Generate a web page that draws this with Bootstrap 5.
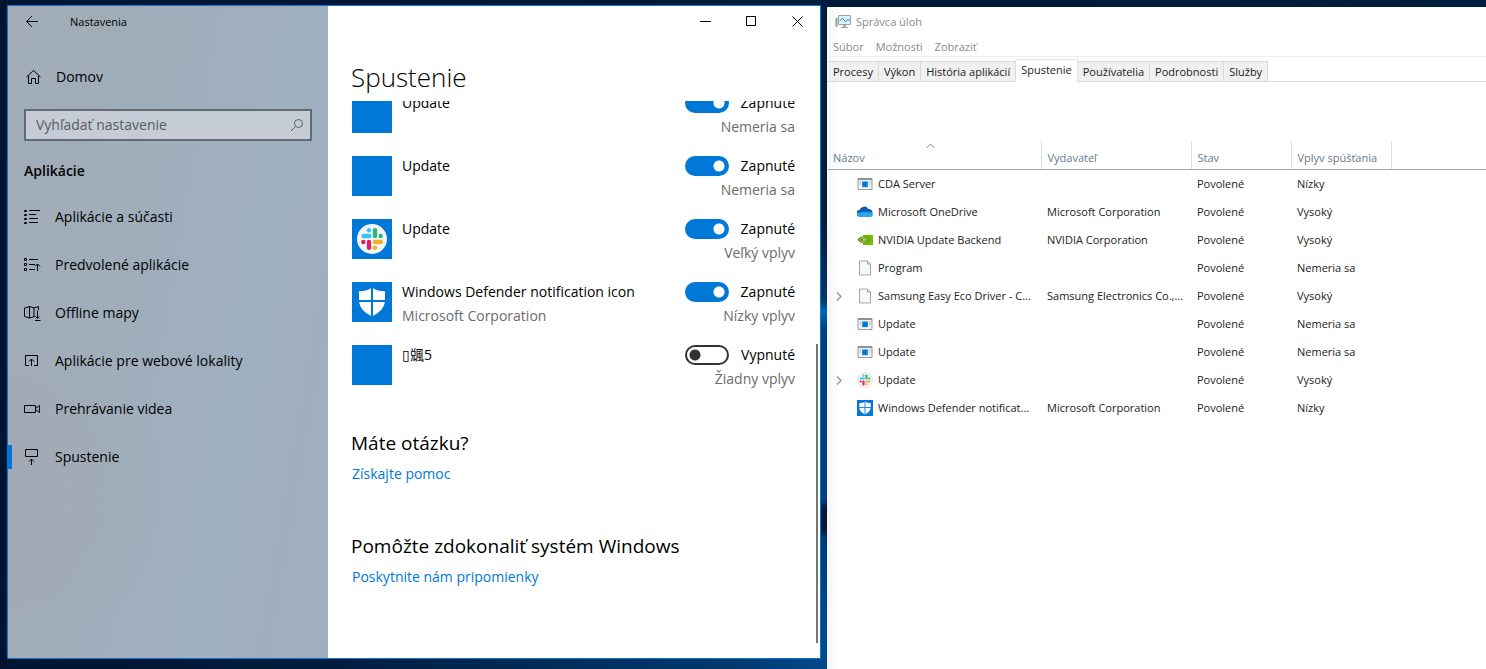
<!DOCTYPE html>
<html lang="sk">
<head>
<meta charset="utf-8">
<meta name="viewport" content="width=device-width, initial-scale=1">
<title>Nastavenia – Spustenie</title>
<link rel="stylesheet" href="https://cdn.jsdelivr.net/npm/bootstrap@5.3.0/dist/css/bootstrap.min.css">
<style>
  body { font-family: "Open Sans", "Noto Sans CJK TC", sans-serif; font-size: 14px; line-height: 24px; color: #000; }
  button, input { font: inherit; }
  a { color: #0078d7; text-decoration: none; }
  .desktop { min-height: 100vh; padding-left: 7px; display: grid; grid-template-columns: minmax(0, 814fr) minmax(0, 659fr); column-gap: 6px;
    background: linear-gradient(#001c3c 0, #001c3c 225px, #003566 300px, #0064b4 312px, #003f78 330px, #00417d 500px, #001a38 508px, #001a38 530px, #003c73 538px, #004a8c 645px) 820px 0 / 8px 100% no-repeat,
      linear-gradient(90deg, #001430 0, #001c3c 330px, #003a70 740px, #00498c 826px) 0 100% / 100% 12px no-repeat,
      linear-gradient(100deg, #001430, #001f40); }
  .win-settings { margin: 5px 0 10px; border: 1px solid #0078d7; background: #fff; }
  .win-tasks { margin-top: 7px; overflow: hidden; color: #222; font-size: 11px; line-height: 20px;
    background: linear-gradient(90deg, #f4f4f4, #fff 12px); }
  .side { flex: 0 0 320px; background: radial-gradient(circle at 0 75%, #a3a8b3 0, transparent 160px), linear-gradient(100deg, #a1acb6, #9eafbf 70%, #a0adbd); }
  .plain { border: 0; background: none; padding: 0; color: inherit; display: flex; align-items: center; }
  .title-row { height: 31px; gap: 31px; padding-left: 17px; font-size: 11px; }
  .side-link { height: 48px; padding-left: 16px; gap: 14px; color: #000; }
  .side-link.home { margin-top: 16px; padding-left: 17px; }
  .side-link.active { background: linear-gradient(#0078d7, #0078d7) 0 50% / 4px 24px no-repeat; }
  .search { margin: 8px 16px 0; height: 32px; border: 2px solid #636b73; background: #c6ccd6; padding-right: 6px; }
  .search input { border: 0; background: none; flex: 1; min-width: 0; padding: 0 10px 1px; color: #4f555c; outline: 0; }
  .search input::placeholder { color: #565c63; opacity: 1; }
  .side h2 { font-size: 14px; line-height: 24px; font-weight: 600; margin: 18px 16px 10px; }
  .caption-btns { height: 31px; }
  .caption-btns button { width: 46px; justify-content: center; }
  .main-pane { padding-left: 23px; }
  .main-pane h1 { font-size: 26px; line-height: 40px; font-weight: 300; margin: 20px 0 4px; }
  .scroll-area { overflow: hidden; }
  .thumb { width: 2px; background: #767676; margin: 243px 2px 15px 0; }
  .app-list { margin: -8px 21px 0 1px; }
  .app-row { height: 63px; gap: 10px; }
  .app-text { margin-top: -2px; }
  .app-ico { width: 40px; height: 40px; flex: none; background: #0078d7; }
  .muted { color: #6b6b6b; }
  .app-row .form-switch { min-height: 0; padding: 0; margin: 0; gap: 12px; }
  .app-row .form-switch .form-check-input { width: 44px; height: 20px; margin: 0; float: none; border: 2px solid #333; border-radius: 10px;
    background: radial-gradient(circle at 8px 8px, #333 5px, transparent 6px); }
  .app-row .form-switch .form-check-input:checked { border-color: #0078d7; background: radial-gradient(circle at 32px 8px, #fff 5px, #0078d7 6px) border-box; background-origin: padding-box; }
  .main-pane h2 { font-size: 19px; line-height: 28px; font-weight: 400; margin: 0 0 5px; }
  .help { margin-top: 21px; }
  .feedback { margin-top: 46px; }
  .help a, .feedback a { padding-left: 1px; }
  .tm-title { height: 29px; gap: 4px; padding-left: 8px; color: #8a8a8a; }
  .tm-menu { height: 21px; gap: 12px; padding: 1px 6px 0; color: #8a8a8a; border-bottom: 1px solid #efefef; }
  .tm-tabs { border-bottom: 1px solid #d9d9d9; margin: 2px 0 0; padding-left: 1px; height: 23px; align-items: flex-end; flex-wrap: nowrap; }
  .tm-tabs .nav-link { padding: 0 5px; height: 20px; line-height: 20px; border: 1px solid #d9d9d9; border-left-width: 0; border-bottom: 0; border-radius: 0; background: #f0f0f0; color: #222; margin: 0; white-space: nowrap; font-size: 11px; }
  .tm-tabs .nav-link.active { height: 23px; background: #fff; color: #222; margin-bottom: -1px; }
  .tm-table { table-layout: fixed; width: 100%; margin: 59px 0 0 1px; }
  .tm-table th { height: 28px; font-weight: 400; color: #66788c; vertical-align: bottom; padding: 0 5px; border-bottom: 1px solid #a8a8a8; border-right: 1px solid #dedede; line-height: 22px; position: relative; }
  .tm-table th:last-child { border-right: 0; }
  .tm-table td { height: 28px; padding: 2px 5px 0; white-space: nowrap; overflow: hidden; text-overflow: ellipsis; }
  .tm-table th:not(:first-child), .tm-table td:not(:first-child) { padding-left: 6px; }
  .sort-mark { position: absolute; left: 50%; top: 2px; margin-left: -8px; }
  .c-name { width: 213px; } .c-pub { width: 150px; } .c-std { width: 100px; }
  .name-cell { gap: 5px; }
  .name-cell .exp { width: 19px; padding-left: 1px; flex: none; line-height: 0; }
  .name-cell > svg { flex: none; }
</style>
</head>
<body>
<svg width="0" height="0" class="position-absolute" aria-hidden="true">
  <symbol id="i-slack" viewBox="0 0 40 40">
    <circle cx="20" cy="20" r="15" fill="#f6f6f6"/>
    <g stroke-width="4.4" stroke-linecap="round" fill="none">
      <path d="M11.500 17h6" stroke="#36c5f0"/><path d="M17 11.200v.1" stroke="#36c5f0"/>
      <path d="M23 11.200v5.800" stroke="#2eb67d"/><path d="M28.700 17v.1" stroke="#2eb67d"/>
      <path d="M23 23h5.800" stroke="#ecb22e"/><path d="M23 28.600v.1" stroke="#ecb22e"/>
      <path d="M17 23v5.800" stroke="#e01e5a"/><path d="M11.300 23v.1" stroke="#e01e5a"/>
    </g>
  </symbol>
  <symbol id="i-shield" viewBox="0 0 40 40">
    <path d="M20 5.500C16.500 8.300 12 9.200 7 9.200V18c0 8 6 13 13 16.500C27 31 33 26 33 18V9.200c-5 0-9.500-.9-13-3.700z" fill="#fff"/>
    <path d="M20 4v31M6 19h28" stroke="#0078d7" stroke-width="2"/>
  </symbol>
  <symbol id="i-app" viewBox="0 0 16 16">
    <path d="M1 2.500h14v11H1z" fill="#f1f2f3" stroke="#959ca3"/><path d="M1 3h14" stroke="#8a9198" stroke-width="2"/>
    <path d="M5.200 5.500h5.600v5.600H5.200z" fill="#0078d7"/><path d="M2.500 6h1.600M2.500 8h1.600M12 6h2M12 8h1.500" stroke="#9eb6cc"/>
  </symbol>
  <symbol id="i-doc" viewBox="0 0 16 16">
    <path d="M2.500 1h8l3 3v11h-11z" fill="#f8f8f8" stroke="#a5a5a5"/><path d="M10.500 1v3h3" fill="#ddd" stroke="#a5a5a5"/>
  </symbol>
</svg>

<main class="desktop">
  <section class="win-settings d-flex" aria-label="Nastavenia">
    <aside class="side">
      <div class="title-row d-flex align-items-center">
        <button class="plain" aria-label="Späť"><svg width="14" height="14" viewBox="0 0 14 14" fill="none" stroke="#000"><path d="M13 6.500H1.500M7 1L1.500 6.500 7 12"/></svg></button>
        <span>Nastavenia</span>
      </div>
      <a href="#" class="side-link home d-flex align-items-center">
        <svg width="17" height="16" viewBox="0 0 17 16" fill="none" stroke="#000"><path d="M1.500 8L8.500 1.500 15.500 8M3.500 6.500v8h3v-5h4v5h3v-8"/></svg>
        <span>Domov</span>
      </a>
      <div class="search d-flex align-items-center">
        <input type="text" placeholder="Vyhľadať nastavenie" aria-label="Vyhľadať nastavenie">
        <svg width="14" height="14" viewBox="0 0 14 14" fill="none" stroke="#555c64"><circle cx="8.500" cy="5.500" r="4"/><path d="M5.600 8.400L1 13"/></svg>
      </div>
      <h2>Aplikácie</h2>
      <nav>
        <a href="#" class="side-link d-flex align-items-center">
          <svg width="17" height="17" viewBox="0 0 17 17" fill="none" stroke="#000"><path d="M.5 1.500h2v1h-2zM.5 5.500h2v1h-2zM.5 9.500h2v1h-2zM.5 13.500h2v1h-2zM5 1.500h11M5 5.500h7M5 9.500h9M5 13.500h9"/></svg><span>Aplikácie a súčasti</span></a>
        <a href="#" class="side-link d-flex align-items-center">
          <svg width="17" height="17" viewBox="0 0 17 17" fill="none" stroke="#000"><path d="M.5 1.500h2v2h-2zM.5 6.500h2v2h-2zM.5 11.500h2v2h-2zM5 2.500h9M5 7.500h6M5 12.500h6M13.500 14V7M11 9.500L13.500 7 16 9.500"/></svg><span>Predvolené aplikácie</span></a>
        <a href="#" class="side-link d-flex align-items-center">
          <svg width="17" height="17" viewBox="0 0 17 17" fill="none" stroke="#000"><path d="M10.500 11.500L5.500 13 .5 11.500V3L5.500 1.500 10 3l4.500-1.500V5M5.500 1.500v11.500M10 3v8.500M13.500 5.500v8M11.500 11.500l2 2 2-2M11 15.500h5.500"/></svg><span>Offline mapy</span></a>
        <a href="#" class="side-link d-flex align-items-center">
          <svg width="17" height="17" viewBox="0 0 17 17" fill="none" stroke="#000"><path d="M5 12.500H1.500v-10h12v10H10M7.500 13V6M5 8.500L7.500 6 10 8.500"/></svg><span>Aplikácie pre webové lokality</span></a>
        <a href="#" class="side-link d-flex align-items-center">
          <svg width="17" height="17" viewBox="0 0 17 17" fill="none" stroke="#000"><path d="M.5 4.500h11v7H.5zM12 7l3.500-2.500v7L12 9"/></svg><span>Prehrávanie videa</span></a>
        <a href="#" class="side-link active d-flex align-items-center">
          <svg width="17" height="17" viewBox="0 0 17 17" fill="none" stroke="#000"><path d="M1.500.5h12v7h-12zM7.500 16v-6M5 12.500L7.500 10l2.500 2.500"/></svg><span>Spustenie</span></a>
      </nav>
    </aside>

    <div class="flex-grow-1 d-flex flex-column">
      <div class="caption-btns d-flex justify-content-end">
        <button class="plain" aria-label="Minimalizovať"><svg width="11" height="11" stroke="#000" fill="none"><path d="M0 5.500h11"/></svg></button>
        <button class="plain" aria-label="Maximalizovať"><svg width="11" height="11" stroke="#000" fill="none"><path d="M.5.5h9v9h-9z"/></svg></button>
        <button class="plain" aria-label="Zavrieť"><svg width="11" height="11" stroke="#000" fill="none"><path d="M.5.5l10 10M10.500.5l-10 10"/></svg></button>
      </div>
      <div class="main-pane flex-grow-1 d-flex flex-column">
        <h1>Spustenie</h1>
        <div class="flex-grow-1 d-flex">
          <div class="scroll-area flex-grow-1">
            <div class="app-list">
              <div class="app-row d-flex">
                <div class="app-ico"></div><div class="app-text flex-grow-1"><div>Update</div></div>
                <div class="app-text text-end"><div class="form-check form-switch d-flex align-items-center"><input class="form-check-input" type="checkbox" role="switch" id="s1" checked><label for="s1">Zapnuté</label></div><div class="muted">Nemeria sa</div></div>
              </div>
              <div class="app-row d-flex">
                <div class="app-ico"></div><div class="app-text flex-grow-1"><div>Update</div></div>
                <div class="app-text text-end"><div class="form-check form-switch d-flex align-items-center"><input class="form-check-input" type="checkbox" role="switch" id="s2" checked><label for="s2">Zapnuté</label></div><div class="muted">Nemeria sa</div></div>
              </div>
              <div class="app-row d-flex">
                <svg class="app-ico"><use href="#i-slack"/></svg><div class="app-text flex-grow-1"><div>Update</div></div>
                <div class="app-text text-end"><div class="form-check form-switch d-flex align-items-center"><input class="form-check-input" type="checkbox" role="switch" id="s3" checked><label for="s3">Zapnuté</label></div><div class="muted">Veľký vplyv</div></div>
              </div>
              <div class="app-row d-flex">
                <svg class="app-ico"><use href="#i-shield"/></svg><div class="app-text flex-grow-1"><div>Windows Defender notification icon</div><div class="muted">Microsoft Corporation</div></div>
                <div class="app-text text-end"><div class="form-check form-switch d-flex align-items-center"><input class="form-check-input" type="checkbox" role="switch" id="s4" checked><label for="s4">Zapnuté</label></div><div class="muted">Nízky vplyv</div></div>
              </div>
              <div class="app-row d-flex">
                <div class="app-ico"></div><div class="app-text flex-grow-1"><div>▯䬇5</div></div>
                <div class="app-text text-end"><div class="form-check form-switch d-flex align-items-center"><input class="form-check-input" type="checkbox" role="switch" id="s5"><label for="s5">Vypnuté</label></div><div class="muted">Žiadny vplyv</div></div>
              </div>
            </div>
            <div class="help"><h2>Máte otázku?</h2><a href="#">Získajte pomoc</a></div>
            <div class="feedback"><h2>Pomôžte zdokonaliť systém Windows</h2><a href="#">Poskytnite nám pripomienky</a></div>
          </div>
          <div class="thumb"></div>
        </div>
      </div>
    </div>
  </section>

  <section class="win-tasks" aria-label="Správca úloh">
    <div class="tm-title d-flex align-items-center">
      <svg width="17" height="16" viewBox="0 0 17 16"><path d="M.5 4h2v9h-2z" fill="#9a9a9a"/><path d="M1 5h1v2H1z" fill="#2ecc40"/><path d="M3.500 1.500h12v9h-12z" fill="#dff3fb" stroke="#9aa3aa"/><path d="M4.500 7L7.500 4l3 4 2-2.500 2.500 1" fill="none" stroke="#2a8fc9"/><path d="M8 11h3v2h2v1H6v-1h2z" fill="#a5a5a5"/></svg>
      <span>Správca úloh</span>
    </div>
    <div class="tm-menu d-flex align-items-center">
      <button class="plain">Súbor</button><button class="plain">Možnosti</button><button class="plain">Zobraziť</button>
    </div>
    <nav class="nav nav-tabs tm-tabs">
      <a class="nav-link" href="#">Procesy</a><a class="nav-link" href="#">Výkon</a><a class="nav-link" href="#">História aplikácií</a><a class="nav-link active" href="#">Spustenie</a><a class="nav-link" href="#">Používatelia</a><a class="nav-link" href="#">Podrobnosti</a><a class="nav-link" href="#">Služby</a>
    </nav>
    <table class="tm-table">
      <colgroup><col class="c-name"><col class="c-pub"><col class="c-std"><col class="c-std"><col></colgroup>
      <thead><tr><th>Názov<svg class="sort-mark" width="9" height="6" fill="none" stroke="#888"><path d="M.5 5l4-4 4 4"/></svg></th><th>Vydavateľ</th><th>Stav</th><th>Vplyv spúšťania</th><th></th></tr></thead>
      <tbody>
        <tr><td><div class="name-cell d-flex align-items-center"><span class="exp"></span><svg width="16" height="16"><use href="#i-app"/></svg><span class="text-truncate">CDA Server</span></div></td><td></td><td>Povolené</td><td>Nízky</td><td></td></tr>
        <tr><td><div class="name-cell d-flex align-items-center"><span class="exp"></span><svg width="16" height="16" viewBox="0 0 16 16"><path d="M2.500 12.500A3 3 0 0 1 2.500 6 5 5 0 0 1 11.500 5 3.600 3.600 0 0 1 15.500 9z" fill="#0a5fb4"/><path d="M2.500 13A2.500 2.500 0 0 1 .5 9L6 8l7.500.2A2.400 2.400 0 0 1 13.500 13z" fill="#28a8ea"/></svg><span class="text-truncate">Microsoft OneDrive</span></div></td><td>Microsoft Corporation</td><td>Povolené</td><td>Vysoký</td><td></td></tr>
        <tr><td><div class="name-cell d-flex align-items-center"><span class="exp"></span><svg width="16" height="16" viewBox="0 0 16 16"><path d="M6 3h10v10H6z" fill="#76b900"/><path d="M.5 7.500C3 4 8 3 13 8c-4 5-10 4-12.500-.5z" fill="#5c9100"/><path d="M3 7.500c2-2.500 5-2.500 7.500.5-2.500 3-5.500 2.500-7.500-.5z" fill="none" stroke="#c4dd92"/><circle cx="7" cy="7.800" r="1" fill="#e4f2c8"/></svg><span class="text-truncate">NVIDIA Update Backend</span></div></td><td>NVIDIA Corporation</td><td>Povolené</td><td>Vysoký</td><td></td></tr>
        <tr><td><div class="name-cell d-flex align-items-center"><span class="exp"></span><svg width="16" height="16"><use href="#i-doc"/></svg><span class="text-truncate">Program</span></div></td><td></td><td>Povolené</td><td>Nemeria sa</td><td></td></tr>
        <tr><td><div class="name-cell d-flex align-items-center"><span class="exp"><svg width="9" height="9" fill="none" stroke="#9a9a9a" stroke-width="1.500"><path d="M3 .5l4 4-4 4"/></svg></span><svg width="16" height="16"><use href="#i-doc"/></svg><span class="text-truncate">Samsung Easy Eco Driver - C...</span></div></td><td>Samsung Electronics Co.,...</td><td>Povolené</td><td>Vysoký</td><td></td></tr>
        <tr><td><div class="name-cell d-flex align-items-center"><span class="exp"></span><svg width="16" height="16"><use href="#i-app"/></svg><span class="text-truncate">Update</span></div></td><td></td><td>Povolené</td><td>Nemeria sa</td><td></td></tr>
        <tr><td><div class="name-cell d-flex align-items-center"><span class="exp"></span><svg width="16" height="16"><use href="#i-app"/></svg><span class="text-truncate">Update</span></div></td><td></td><td>Povolené</td><td>Nemeria sa</td><td></td></tr>
        <tr><td><div class="name-cell d-flex align-items-center"><span class="exp"><svg width="9" height="9" fill="none" stroke="#9a9a9a" stroke-width="1.500"><path d="M3 .5l4 4-4 4"/></svg></span><svg width="16" height="16" viewBox="4 4 32 32"><use href="#i-slack" width="40" height="40"/><circle cx="20" cy="20" r="15" fill="none" stroke="#c8c8c8"/></svg><span class="text-truncate">Update</span></div></td><td></td><td>Povolené</td><td>Vysoký</td><td></td></tr>
        <tr><td><div class="name-cell d-flex align-items-center"><span class="exp"></span><svg width="16" height="16" viewBox="2 2 36 36"><path d="M0 0h40v40H0z" fill="#0078d7"/><use href="#i-shield" width="40" height="40"/></svg><span class="text-truncate">Windows Defender notificat...</span></div></td><td>Microsoft Corporation</td><td>Povolené</td><td>Nízky</td><td></td></tr>
      </tbody>
    </table>
  </section>
</main>
<script src="https://cdn.jsdelivr.net/npm/bootstrap@5.3.0/dist/js/bootstrap.bundle.min.js"></script>
</body>
</html>
